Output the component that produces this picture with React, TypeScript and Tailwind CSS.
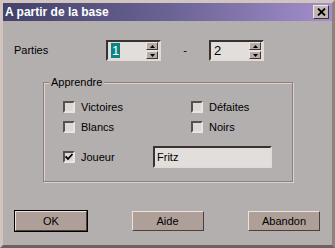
import React from "react";

const font = { fontFamily: '"Liberation Sans", Arial, sans-serif' };

function SpinBtn({ up }: { up?: boolean }) {
  return (
    <div className="flex h-[8px] w-[12px] items-center justify-center border border-t-[#eee6e2] border-l-[#eee6e2] border-b-[#3e3533] border-r-[#3e3533] bg-[#b8aca7]">
      <svg width="5" height="3" viewBox="0 0 5 3">
        {up ? <path d="M0 3 L2.5 0 L5 3 Z" fill="#000" /> : <path d="M0 0 L5 0 L2.5 3 Z" fill="#000" />}
      </svg>
    </div>
  );
}

function Spinner({ value, selected }: { value: string; selected?: boolean }) {
  return (
    <div className="flex h-[21px] w-[55px] items-center border-2 border-t-[#3a3231] border-l-[#3a3231] border-b-[#e2dad6] border-r-[#e2dad6] bg-[#e2dedb]">
      <div className="flex flex-1 items-center pl-[3px] text-[13px] leading-[15px]">
        <span className={selected ? "bg-[#0c8484] px-[1px] text-white" : "text-black"}>{value}</span>
      </div>
      <div className="mr-px flex flex-col gap-px">
        <SpinBtn up />
        <SpinBtn />
      </div>
    </div>
  );
}

function Check({ label, checked }: { label: string; checked?: boolean }) {
  return (
    <div className="flex h-[12px] items-center gap-[6px]">
      <div className="flex h-[12px] w-[12px] items-center justify-center border-2 border-t-[#5b4f4c] border-l-[#5b4f4c] border-b-[#ece4e0] border-r-[#ece4e0] bg-[#dcd8d5]">
        {checked && (
          <svg width="8" height="8" viewBox="0 0 8 8">
            <path d="M0.5 3.5 L3 6 L7.5 1" stroke="#000" strokeWidth="1.8" fill="none" />
          </svg>
        )}
      </div>
      <span className="text-[11px] leading-[12px] text-black">{label}</span>
    </div>
  );
}

function Button({ label, isDefault }: { label: string; isDefault?: boolean }) {
  return (
    <div className={isDefault ? "border border-black" : "border border-transparent"}>
      <div className="flex h-[20px] w-[72px] items-center justify-center border border-t-[#ece2dc] border-l-[#ece2dc] border-b-[#4a403e] border-r-[#4a403e] bg-[#ae9f99] text-[11px] text-black">
        {label}
      </div>
    </div>
  );
}

export default function App() {
  return (
    <div style={font} className="flex h-[248px] w-[335px] flex-col border-[3px] border-t-[#d2c4be] border-l-[#d2c4be] border-b-[#6e6260] border-r-[#8e827e] bg-[#b3afae]">
      {/* title bar */}
      <div className="flex h-[18px] items-center justify-between bg-gradient-to-r from-[#42426a] via-[#6a6294] to-[#a48fcc] pl-[2px] pr-[3px]">
        <span className="text-[12px] font-bold text-white">A partir de la base</span>
        <div className="flex h-[14px] w-[16px] items-center justify-center border border-t-[#f0e6e0] border-l-[#f0e6e0] border-b-[#3a3230] border-r-[#3a3230] bg-[#c2b6b0]">
          <svg width="9" height="8" viewBox="0 0 9 8">
            <path d="M1 0.5 L8 7.5 M8 0.5 L1 7.5" stroke="#000" strokeWidth="1.8" />
          </svg>
        </div>
      </div>

      {/* Parties row */}
      <div className="mt-[19px] flex items-center pl-[11px]">
        <span className="w-[92px] text-[11px] text-black">Parties</span>
        <Spinner value="1" selected />
        <span className="w-[48px] text-center text-[11px] text-black">-</span>
        <Spinner value="2" />
      </div>

      {/* group box */}
      <div className="relative ml-[40px] mt-[21px] h-[100px] w-[250px] border border-[#8e7f7b] pl-[19px] pt-[18px] shadow-[inset_1px_1px_0_#ddd2cc,1px_1px_0_#ddd2cc]">
        <span className="absolute left-[5px] top-[-8px] bg-[#b3afae] px-[2px] text-[11px] leading-[14px] text-black">Apprendre</span>
        <div className="flex flex-col">
          <div className="flex">
            <div className="w-[128px]"><Check label="Victoires" /></div>
            <Check label="Défaites" />
          </div>
          <div className="mt-[8px] flex">
            <div className="w-[128px]"><Check label="Blancs" /></div>
            <Check label="Noirs" />
          </div>
          <div className="mt-[13px] flex items-center">
            <div className="w-[90px]"><Check label="Joueur" checked /></div>
            <div className="flex h-[22px] w-[119px] items-center border-2 border-t-[#3a3231] border-l-[#3a3231] border-b-[#e2dad6] border-r-[#e2dad6] bg-[#e2dedb] pl-[2px] text-[11px] text-black">
              Fritz
            </div>
          </div>
        </div>
      </div>

      {/* buttons */}
      <div className="mt-[28px] flex justify-between px-[11px]">
        <Button label="OK" isDefault />
        <Button label="Aide" />
        <Button label="Abandon" />
      </div>
    </div>
  );
}
